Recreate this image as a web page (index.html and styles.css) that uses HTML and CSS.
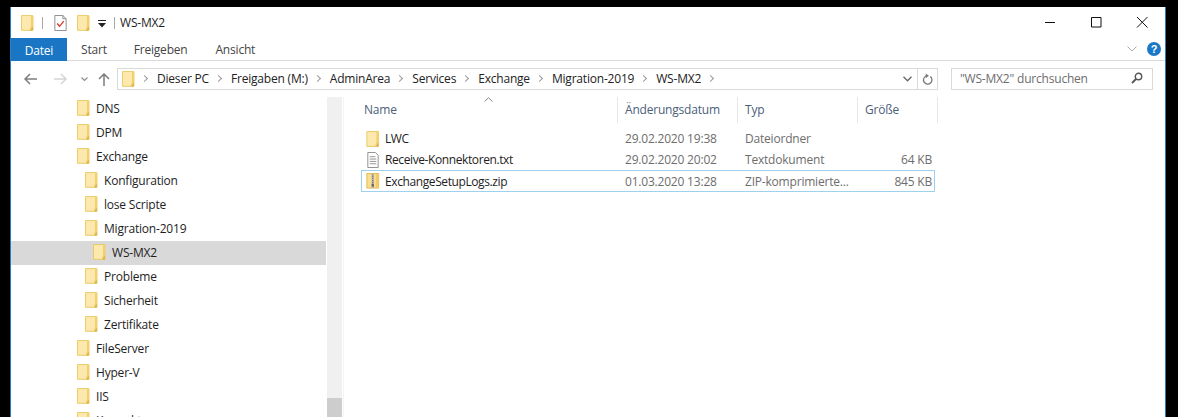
FILE: index.html
```html
<!DOCTYPE html>
<html lang="de">
<head>
<meta charset="utf-8">
<title>WS-MX2</title>
<link rel="stylesheet" href="styles.css">
</head>
<body>
<svg class="defs" width="0" height="0" aria-hidden="true">
  <symbol id="folder" viewBox="0 0 14 17">
    <path d="M.5.5h12.200v15.900H.5z" fill="#fbe08f" stroke="#e8c765"/>
    <path d="M1.200 1.200h9.600v14.400H1.200z" fill="#fde9ad"/>
    <path d="M10.800 1v10.500l-1.600 4.700h4V1z" fill="#f4cf6b"/>
    <path d="M10 16.500l2.800-4.600v4.600z" fill="#dcb24e"/>
  </symbol>
</svg>
<div class="window">
  <header class="titlebar">
    <svg class="qa-folder"><use href="#folder"/></svg>
    <span class="qa-sep"></span>
    <svg class="qa-check" viewBox="0 0 13 17"><path d="M.5.500h8.500l3.500 3.500v12.500H.5z" fill="#fff" stroke="#8a8a8a"/><path d="M9 .5V4h3.500" fill="none" stroke="#8a8a8a"/><path d="M3 9l2.500 3L10 6.500" fill="none" stroke="#d8392b" stroke-width="1.400"/></svg>
    <svg class="qa-folder qa-folder2"><use href="#folder"/></svg>
    <svg class="qa-drop" viewBox="0 0 8 8"><path d="M0 .5h8" stroke="#222" fill="none"/><path d="M0 3h8L4 7.500z" fill="#222"/></svg>
    <span class="qa-sep qa-sep2"></span>
    <span class="title">WS-MX2</span>
    <div class="controls">
      <svg class="ctl" viewBox="0 0 46 20"><path d="M18 10.500h10" stroke="#111" fill="none"/></svg>
      <svg class="ctl" viewBox="0 0 46 20"><path d="M18.500 5.500h9.500v9.500h-9.500z" stroke="#111" fill="none"/></svg>
      <svg class="ctl" viewBox="0 0 46 20"><path d="M18 5l10.500 10.500M28.500 5L18 15.500" stroke="#111" fill="none"/></svg>
    </div>
  </header>
  <nav class="ribbon">
    <span class="tab tab-file">Datei</span>
    <span class="tab tab-start">Start</span>
    <span class="tab tab-share">Freigeben</span>
    <span class="tab tab-view">Ansicht</span>
    <svg class="rib-chev" viewBox="0 0 10 6"><path d="M.5.500L5 5 9.500.5" fill="none" stroke="#a9a9a9"/></svg>
    <svg class="help" viewBox="0 0 14 14"><circle cx="7" cy="7" r="7" fill="#1b78c8"/><text x="7" y="11" text-anchor="middle" class="help-q">?</text></svg>
  </nav>
  <div class="addressrow">
    <svg class="nav-ic nav-back" viewBox="0 0 13 12"><path d="M6 1L1 6l5 5M1 6h12" fill="none" stroke="#7d7d7d" stroke-width="1.500"/></svg>
    <svg class="nav-ic nav-fwd" viewBox="0 0 13 12"><path d="M7 1l5 5-5 5M12 6H0" fill="none" stroke="#d4d4d4" stroke-width="1.500"/></svg>
    <svg class="nav-chev" viewBox="0 0 7 5"><path d="M.5.500L3.500 3.500 6.500.5" fill="none" stroke="#8c8c8c" stroke-width="1.200"/></svg>
    <svg class="nav-ic nav-up" viewBox="0 0 12 13"><path d="M1 6l5-5 5 5M6 1v12" fill="none" stroke="#7d7d7d" stroke-width="1.500"/></svg>
    <div class="addressbox">
      <svg class="addr-folder"><use href="#folder"/></svg>
      <ol class="crumbs">
        <li>Dieser PC</li>
        <li>Freigaben (M:)</li>
        <li>AdminArea</li>
        <li>Services</li>
        <li>Exchange</li>
        <li>Migration-2019</li>
        <li>WS-MX2</li>
      </ol>
      <svg class="addr-chev" viewBox="0 0 9 6"><path d="M.5.800L4.500 4.800 8.500.8" fill="none" stroke="#666" stroke-width="1.300"/></svg>
      <span class="addr-refresh"><svg viewBox="0 0 12 14"><path d="M4.500 3.200a4.600 4.600 0 1 0 4.500.6" fill="none" stroke="#777" stroke-width="1.400"/><path d="M4 .5v5l3.500-2.500z" fill="#777"/></svg></span>
    </div>
    <div class="searchbox">
      <span>"WS-MX2" durchsuchen</span>
      <svg viewBox="0 0 12 12"><circle cx="7.500" cy="4.500" r="3.200" fill="none" stroke="#555" stroke-width="1.400"/><path d="M5 7l-4 4" stroke="#555" stroke-width="1.800"/></svg>
    </div>
  </div>
  <main class="body">
    <aside class="tree">
      <ul class="tree-list">
        <li class="node"><svg class="ficon"><use href="#folder"/></svg>DNS</li>
        <li class="node"><svg class="ficon"><use href="#folder"/></svg>DPM</li>
        <li class="node"><svg class="ficon"><use href="#folder"/></svg>Exchange</li>
        <li class="node lvl1"><svg class="ficon"><use href="#folder"/></svg>Konfiguration</li>
        <li class="node lvl1"><svg class="ficon"><use href="#folder"/></svg>lose Scripte</li>
        <li class="node lvl1"><svg class="ficon"><use href="#folder"/></svg>Migration-2019</li>
        <li class="node lvl2 selected"><svg class="ficon"><use href="#folder"/></svg>WS-MX2</li>
        <li class="node lvl1"><svg class="ficon"><use href="#folder"/></svg>Probleme</li>
        <li class="node lvl1"><svg class="ficon"><use href="#folder"/></svg>Sicherheit</li>
        <li class="node lvl1"><svg class="ficon"><use href="#folder"/></svg>Zertifikate</li>
        <li class="node"><svg class="ficon"><use href="#folder"/></svg>FileServer</li>
        <li class="node"><svg class="ficon"><use href="#folder"/></svg>Hyper-V</li>
        <li class="node"><svg class="ficon"><use href="#folder"/></svg>IIS</li>
        <li class="node"><svg class="ficon"><use href="#folder"/></svg>Konnektoren</li>
      </ul>
      <div class="scrollbar"><span class="thumb"></span></div>
    </aside>
    <section class="files">
      <div class="thead">
        <span class="th th-name">Name<svg class="sort" viewBox="0 0 9 5"><path d="M.5 4.500L4.500.8l4 3.700" fill="none" stroke="#8a8a8a"/></svg></span>
        <span class="th th-date">Änderungsdatum</span>
        <span class="th th-type">Typ</span>
        <span class="th th-size">Größe</span>
      </div>
      <div class="row">
        <span class="c-name"><svg class="ricon"><use href="#folder"/></svg><b>LWC</b></span>
        <span class="c-date">29.02.2020 19:38</span>
        <span class="c-type">Dateiordner</span>
        <span class="c-size"></span>
      </div>
      <div class="row">
        <span class="c-name"><svg class="ricon" viewBox="0 0 14 17"><path d="M1.500.5h8l3 3v13h-11z" fill="#fff" stroke="#8c8c8c"/><path d="M3.500 5h6M3.500 7.500h7M3.500 10h7M3.500 12.500h7" stroke="#8f8f8f" fill="none"/></svg><b>Receive-Konnektoren.txt</b></span>
        <span class="c-date">29.02.2020 20:02</span>
        <span class="c-type">Textdokument</span>
        <span class="c-size">64 KB</span>
      </div>
      <div class="row row-sel">
        <span class="c-name"><svg class="ricon" viewBox="0 0 14 17"><path d="M.5.500h12.500v15.500H.5z" fill="#fbdf8d" stroke="#dcb84f"/><path d="M10 1h3v15h-3z" fill="#f2cb66"/><path d="M5.500 1h2.500v15H5.500z" fill="#b9b9b9"/><path d="M6.200 1.500h1.100v1H6.200zm0 2h1.100v1H6.200zm0 2h1.100v1H6.200zm0 2h1.100v1H6.200zm0 2h1.100v1H6.200z" fill="#555"/><path d="M5.500 11.500h2.500v3H5.500z" fill="#666"/></svg><b>ExchangeSetupLogs.zip</b></span>
        <span class="c-date">01.03.2020 13:28</span>
        <span class="c-type">ZIP-komprimierte...</span>
        <span class="c-size">845 KB</span>
      </div>
    </section>
  </main>
</div>
</body>
</html>
```
FILE: styles.css
```css
* { box-sizing: border-box; }
html, body { margin: 0; height: 100%; }
body {
  background: #000;
  padding: 7px 12px 0 10px;
  overflow: hidden;
  font-family: "Open Sans", "Noto Sans", sans-serif;
  font-size: 12px;
  letter-spacing: -0.2px;
  color: #1e1e1e;
}
.defs { position: absolute; }
ul, ol { list-style: none; margin: 0; padding: 0; }
svg { display: block; flex: none; }

.window {
  height: 410px;
  background: #fff;
  border-left: 1px solid #2d7fbd;
  border-right: 1px solid #2d7fbd;
  display: flex;
  flex-direction: column;
  overflow: hidden;
}

/* title bar */
.titlebar { height: 31px; display: flex; align-items: center; padding-left: 10px; flex: none; }
.qa-folder { width: 13px; height: 16px; }
.qa-folder2 { margin-left: 10px; }
.qa-sep { width: 1px; height: 12px; background: #a9a9a9; margin-left: 8px; }
.qa-check { width: 13px; height: 16px; margin-left: 11px; }
.qa-drop { width: 8px; height: 8px; margin: 3px 0 0 8px; }
.qa-sep2 { margin-left: 8px; }
.title { margin-left: 5px; font-size: 12px; }
.controls { margin-left: auto; display: flex; margin-top: -2px; }
.ctl { width: 46px; height: 20px; }

/* ribbon */
.ribbon {
  height: 23px;
  flex: none;
  display: flex;
  align-items: center;
  border-bottom: 1px solid #dadbdc;
  color: #444;
  padding-right: 4px;
}
.tab { line-height: 22px; margin-top: 2px; }
.tab-file { width: 56px; height: 23px; margin-top: 0; line-height: 25px; background: #1a76c4; color: #fff; text-align: center; align-self: flex-start; }
.tab-start { margin-left: 14px; }
.tab-share { margin-left: 27px; }
.tab-view { margin-left: 28px; }
.rib-chev { width: 10px; height: 6px; margin-left: auto; }
.help { width: 14px; height: 14px; margin-left: 10px; }
.help-q { font: bold 11px "Liberation Sans", sans-serif; fill: #fff; }

/* address row */
.addressrow { height: 36px; flex: none; display: flex; align-items: center; }
.nav-ic { width: 13px; height: 12px; }
.nav-back { margin-left: 13px; }
.nav-fwd { margin-left: 17px; }
.nav-chev { width: 7px; height: 5px; margin-left: 14px; }
.nav-up { width: 12px; height: 13px; margin-left: 10px; }
.addressbox {
  width: 821px;
  height: 22px;
  margin-left: 7px;
  border: 1px solid #d9d9d9;
  display: flex;
  align-items: center;
  padding-left: 4px;
}
.addr-folder { width: 13px; height: 16px; }
.crumbs { display: flex; margin-bottom: 2px; color: #222; }
.crumbs li { display: flex; align-items: center; }
.crumbs li:first-child::before,
.crumbs li::after {
  content: "";
  width: 4px;
  height: 4px;
  border-top: 1px solid #9a9a9a;
  border-right: 1px solid #9a9a9a;
  transform: rotate(45deg);
  margin: 0 10px 0 7px;
}
.addr-chev { width: 9px; height: 6px; margin-left: auto; margin-right: 5px; }
.addr-refresh {
  width: 20px;
  height: 20px;
  border-left: 1px solid #d9d9d9;
  display: flex;
  align-items: center;
  justify-content: center;
}
.addr-refresh svg { width: 11px; height: 13px; }
.searchbox {
  width: 202px;
  height: 22px;
  margin-left: 13px;
  border: 1px solid #d9d9d9;
  display: flex;
  align-items: center;
  justify-content: space-between;
  padding: 0 9px 2px 8px;
  color: #6d6d6d;
}
.searchbox svg { width: 12px; height: 12px; }

/* body */
.body { flex: 1; min-height: 0; display: flex; }
.tree { width: 333px; flex: none; display: flex; border-right: 1px solid #f4f4f4; }
.tree-list { width: 315px; flex: none; }
.node { height: 24px; display: flex; align-items: center; padding: 0 0 2px 66px; gap: 6px; }
.lvl1 { padding-left: 74px; }
.lvl2 { padding-left: 82px; }
.selected { background: #d9d9d9; }
.ficon { width: 13px; height: 16px; }
.scrollbar { width: 15px; margin-left: 1px; background: #f0f0f0; padding-top: 301px; }
.thumb { display: block; height: 40px; background: #cdcdcd; }

/* file list */
.files { flex: 1; padding-left: 17px; }
.thead { height: 26px; margin-bottom: 5px; display: flex; color: #4c607a; }
.th { position: relative; height: 100%; display: flex; align-items: center; padding: 0 0 2px 7px; border-right: 1px solid #e8e8e8; }
.th-name { width: 257px; padding-left: 3px; }
.th-date { width: 120px; }
.th-type { width: 120px; }
.th-size { width: 80px; }
.sort { position: absolute; left: 123px; top: 0; width: 9px; height: 5px; }
.row { height: 21px; width: 574px; display: flex; align-items: center; border: 1px solid transparent; color: #6d6d6d; }
.row-sel { border-color: #9fd0ee; height: 22px; }
.c-name { width: 263px; flex: none; display: flex; align-items: center; padding-left: 4px; gap: 5px; }
.c-name b { font-weight: 400; color: #1e1e1e; letter-spacing: -0.4px; }
.ricon { width: 14px; height: 16px; }
.c-date { width: 120px; flex: none; }
.c-type { width: 120px; flex: none; }
.c-size { width: 67px; flex: none; text-align: right; }
```
